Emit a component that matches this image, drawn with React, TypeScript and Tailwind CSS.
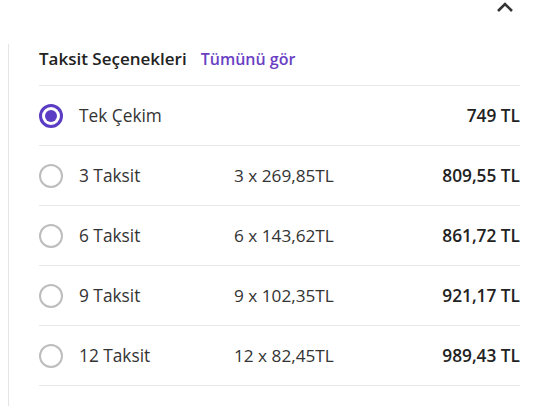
import React, { useState } from 'react'

const options = [
  { label: 'Tek Çekim', monthly: '', total: '749 TL' },
  { label: '3 Taksit', monthly: '3 x 269,85TL', total: '809,55 TL' },
  { label: '6 Taksit', monthly: '6 x 143,62TL', total: '861,72 TL' },
  { label: '9 Taksit', monthly: '9 x 102,35TL', total: '921,17 TL' },
  { label: '12 Taksit', monthly: '12 x 82,45TL', total: '989,43 TL' },
]

export default function App() {
  const [selected, setSelected] = useState(0)

  return (
    <div
      className="w-[542px] h-[406px] bg-white overflow-hidden text-[#333]"
      style={{ fontFamily: '"Open Sans", "Noto Sans", sans-serif' }}
    >
      <div className="flex justify-end pr-[28px] pt-[1px] h-[44px]">
        <svg width="18" height="12" viewBox="0 0 18 12" fill="none">
          <path d="M2 10 L9 3 L16 10" stroke="#333" strokeWidth="2.6" />
        </svg>
      </div>
      <div className="ml-[8px] border-l border-[#e5e5e5] pl-[30px] pr-[22px] h-[362px]">
        <div className="flex items-center gap-[14px] h-[42px] pb-[12px] border-b border-[#e8e8e8]">
          <span className="text-[17px] font-semibold text-[#222]">Taksit Seçenekleri</span>
          <span className="text-[16px] font-semibold text-[#6a3fc4]">Tümünü gör</span>
        </div>
        {options.map((o, i) => (
          <div
            key={o.label}
            onClick={() => setSelected(i)}
            className="flex items-center h-[60px] pt-[1px] border-b border-[#e8e8e8] cursor-pointer"
          >
            <span
              className={
                selected === i
                  ? 'w-[24px] h-[24px] rounded-full border-[3px] border-[#5b3cc4] flex items-center justify-center'
                  : 'w-[24px] h-[24px] rounded-full border-[2.5px] border-[#bdbdbd]'
              }
            >
              {selected === i && <span className="w-[12px] h-[12px] rounded-full bg-[#5b3cc4]" />}
            </span>
            <span className="ml-[16px] w-[155px] text-[17.3px] text-[#333]">{o.label}</span>
            <span className="text-[17.2px] text-[#333]">{o.monthly}</span>
            <span className="ml-auto text-[17.3px] font-semibold text-[#222]">{o.total}</span>
          </div>
        ))}
      </div>
    </div>
  )
}
